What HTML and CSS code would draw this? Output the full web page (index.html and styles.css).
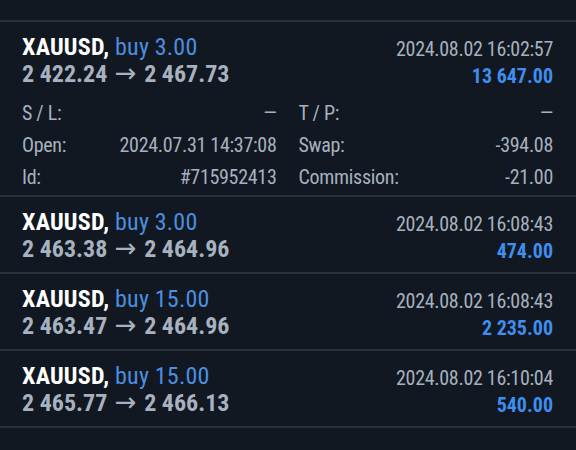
FILE: index.html
```html
<html lang="en">

<head>
    <meta charset="UTF-8">
    <meta name="viewport" content="width=device-width, initial-scale=1.0">
    <title>History</title>
    <link rel="stylesheet" href="styles.css">
</head>

<body>
    <div class="list">
        <div class="deal open">
            <div class="head">
                <div class="left">
                    <div class="title"><b>XAUUSD,</b> <span class="side">buy 3.00</span></div>
                    <div class="price">2 422.24 <span class="arrow">&rarr;</span> 2 467.73</div>
                </div>
                <div class="right">
                    <div class="time">2024.08.02 16:02:57</div>
                    <div class="profit">13 647.00</div>
                </div>
            </div>
            <div class="details">
                <div class="pair"><span>S / L:</span><span>&mdash;</span></div>
                <div class="pair"><span>T / P:</span><span>&mdash;</span></div>
                <div class="pair"><span>Open:</span><span>2024.07.31 14:37:08</span></div>
                <div class="pair"><span>Swap:</span><span>-394.08</span></div>
                <div class="pair"><span>Id:</span><span>#715952413</span></div>
                <div class="pair"><span>Commission:</span><span>-21.00</span></div>
            </div>
        </div>

        <div class="deal">
            <div class="head">
                <div class="left">
                    <div class="title"><b>XAUUSD,</b> <span class="side">buy 3.00</span></div>
                    <div class="price">2 463.38 <span class="arrow">&rarr;</span> 2 464.96</div>
                </div>
                <div class="right">
                    <div class="time">2024.08.02 16:08:43</div>
                    <div class="profit">474.00</div>
                </div>
            </div>
        </div>

        <div class="deal">
            <div class="head">
                <div class="left">
                    <div class="title"><b>XAUUSD,</b> <span class="side">buy 15.00</span></div>
                    <div class="price">2 463.47 <span class="arrow">&rarr;</span> 2 464.96</div>
                </div>
                <div class="right">
                    <div class="time">2024.08.02 16:08:43</div>
                    <div class="profit">2 235.00</div>
                </div>
            </div>
        </div>

        <div class="deal">
            <div class="head">
                <div class="left">
                    <div class="title"><b>XAUUSD,</b> <span class="side">buy 15.00</span></div>
                    <div class="price">2 465.77 <span class="arrow">&rarr;</span> 2 466.13</div>
                </div>
                <div class="right">
                    <div class="time">2024.08.02 16:10:04</div>
                    <div class="profit">540.00</div>
                </div>
            </div>
        </div>
    </div>
</body>

</html>
```

FILE: styles.css
```css
body {
    margin: 0;
    background-color: #111821;
    font-family: "Roboto Condensed", Roboto, sans-serif;
    color: #a7b1bf;
    height: 450px;
    overflow: hidden;
}

.list {
    padding-top: 20px;
}

.deal {
    border-top: 2px solid #29313b;
    padding: 0 23px 0 22px;
}

.deal:last-child {
    border-bottom: 2px solid #29313b;
}

.open {
    padding-bottom: 2px;
}

.head {
    display: flex;
    justify-content: space-between;
    height: 75px;
    padding-top: 12px;
    box-sizing: border-box;
}

.title {
    font-size: 24px;
    line-height: 26px;
    letter-spacing: 0.2px;
}

.title b {
    color: #ffffff;
}

.side {
    color: #4c8fe0;
}

.price {
    font-size: 24px;
    line-height: 28px;
    font-weight: bold;
}

.arrow {
    font-family: "DejaVu Sans", sans-serif;
    font-weight: normal;
    font-size: 26px;
    line-height: 0;
    margin: 0 2px;
}

.right {
    text-align: right;
}

.time {
    font-size: 20px;
    line-height: 30px;
    letter-spacing: -0.3px;
}

.profit {
    font-size: 20px;
    line-height: 24px;
    font-weight: bold;
    color: #3f8ef0;
}

.details {
    display: grid;
    grid-template-columns: 1fr 1fr;
    column-gap: 22px;
}

.pair {
    display: flex;
    justify-content: space-between;
    font-size: 20px;
    line-height: 32px;
    letter-spacing: -0.3px;
}
```
